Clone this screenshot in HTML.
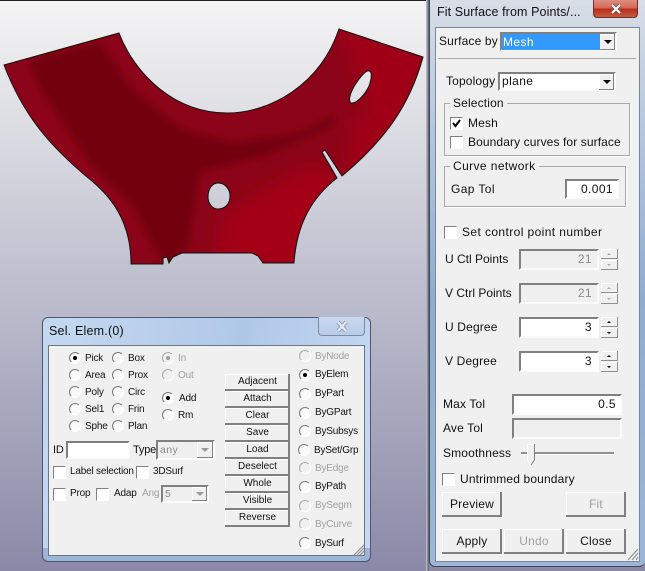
<!DOCTYPE html>
<html><head><meta charset="utf-8"><style>
html,body{margin:0;padding:0}
body{width:645px;height:571px;overflow:hidden;position:relative;font-family:"Liberation Sans",sans-serif;color:#000;background:linear-gradient(#f4f4f4 0,#bbbccc 300px,#8a8aa8 571px)}
div{box-sizing:border-box}
.a,.t,.in,.b,.r,.c,.g,.sp{position:absolute}
.t{white-space:nowrap;line-height:14px;height:14px}
.s{font-size:10px;letter-spacing:-.2px;color:#111;transform:translateY(1px)}
.m{font-size:12px;letter-spacing:.15px;color:#111}
.w{letter-spacing:.4px}
.d{color:#a0a0a0}
.in{border:2px solid;border-color:#808080 #fbfbfb #fbfbfb #808080;background:#fff;font-size:12px;text-align:right;padding-right:4px;letter-spacing:.4px;color:#111}
.in.off{background:#efefef;color:#8a8a8a}
.b{background:#f0f0f0;box-shadow:inset -2px -2px 0 #808080,inset 1px 1px 0 #fff;text-align:center;color:#111}
.b.sm{font-size:10px;letter-spacing:0;line-height:16px;height:17px;left:225px;width:65px}
.b.lg{font-size:12px;line-height:24px;height:25px;width:60px;letter-spacing:.2px}
.r{width:12px;height:12px;border-radius:50%;border:1px solid;border-color:#777 #fff #fff #777;background:#fafafa}
.r.on:after{content:"";position:absolute;left:3px;top:3px;width:4px;height:4px;border-radius:50%;background:#000}
.r.off.on:after{background:#999}
.r.off{background:#f0f0f0;border-color:#aaa #fff #fff #aaa}
.c{width:13px;height:13px;border:1px solid;border-color:#808080 #fff #fff #808080;background:#fff}
.g{border:1px solid #a8a8a8;box-shadow:1px 1px 0 #fff}
.ar{position:absolute;background:#f0f0f0;box-shadow:inset -1px -1px 0 #808080,inset 1px 1px 0 #fff}
.ar:after{content:"";position:absolute;left:50%;top:50%;margin:-2px 0 0 -4px;border:4px solid transparent;border-top:4px solid #000;border-bottom:0}
.ar.off:after{border-top-color:#999}
.sp{width:17px;height:10px;background:#f0f0f0;box-shadow:inset -1px -1px 0 #909090,inset 1px 1px 0 #fff}
.sp:after{content:"";position:absolute;left:6px;top:4px;border:2px solid transparent;border-bottom:2px solid #000;border-top:0}
.sp.dn:after{border-bottom:0;border-top:2px solid #000}
.sp.off:after{border-bottom-color:#aaa;border-top-color:#aaa}
</style></head><body>
<div class="a" style="left:0;top:0;width:645px;height:1px;background:#222"></div>
<div class="a" style="left:426px;top:0;width:3px;height:571px;background:linear-gradient(90deg,#c8c8d4,#555a66)"></div>

<svg class="a" style="left:0;top:0" width="430" height="300" viewBox="0 0 430 300">
<defs>
<clipPath id="cp"><path clip-rule="evenodd" d="M4 65 L119 33 C135 75 175 113 227 113 C270 113 320 85 339 29 L423 57 C410 105 385 140 342 176 L325 150 L322 152 L337 178 C315 195 297 220 294 263 L263 263 L258 256 L252 253 L182 253 L173 257 L169 263 L167 257 L163 258 L163 264 L131 264 C131 220 110 195 87 177 C55 150 25 120 4 65 Z M218 183 C225 183 230 189 230 196 C230 204 225 209 218 209 C212 209 208 203 208 197 C208 189 212 183 218 183 Z M369 71 C372 71 372 78 369 86 C365 95 356 104 351 103 C348 101 350 93 355 85 C360 77 366 70 369 71 Z"/></clipPath>
<filter id="bl" x="-30%" y="-30%" width="160%" height="160%"><feGaussianBlur stdDeviation="4"/></filter>
<filter id="bl2" x="-30%" y="-30%" width="160%" height="160%"><feGaussianBlur stdDeviation="9"/></filter>
</defs>
<g clip-path="url(#cp)">
<rect width="430" height="300" fill="#8c0419"/>
<path d="M335 20 L430 50 L400 140 L345 185 L350 120 L372 110 Z" fill="#a00018" filter="url(#bl2)"/>
<path d="M215 270 L222 215 L310 165 L345 178 L310 270 Z" fill="#a40018" filter="url(#bl2)"/>
<path d="M28 60 L100 42 L133 90 L183 130 L233 143 L300 133 L335 115 L335 125 L267 155 L200 172 L187 250 L165 268 L133 207 L93 167 L43 93 Z" fill="#72000e" filter="url(#bl)"/>
</g>
<path d="M4 65 L119 33 C135 75 175 113 227 113 C270 113 320 85 339 29 L423 57 C410 105 385 140 342 176 L325 150 L322 152 L337 178 C315 195 297 220 294 263 L263 263 L258 256 L252 253 L182 253 L173 257 L169 263 L167 257 L163 258 L163 264 L131 264 C131 220 110 195 87 177 C55 150 25 120 4 65 Z M218 183 C225 183 230 189 230 196 C230 204 225 209 218 209 C212 209 208 203 208 197 C208 189 212 183 218 183 Z M369 71 C372 71 372 78 369 86 C365 95 356 104 351 103 C348 101 350 93 355 85 C360 77 366 70 369 71 Z" fill="none" stroke="#111" stroke-width="1"/>
</svg>

<!-- Sel. Elem dialog -->
<div class="a" style="left:42px;top:317px;width:329px;height:245px;border-radius:6px;border:1px solid #4a5a70;background:linear-gradient(100deg,#c4d8f0,#b0c8e8 55%,#c6daf2);"></div>
<div class="a" style="left:42px;top:548px;width:329px;height:14px;border-radius:0 0 6px 6px;border:1px solid #4a5a70;border-top:0;background:#9db5d6"></div>
<div class="t" style="left:49px;top:324px;font-size:12.5px;color:#111;letter-spacing:.2px">Sel. Elem.(0)</div>
<div class="a" style="left:318px;top:317px;width:47px;height:19px;border:1px solid #7a8ca8;border-top:0;border-radius:0 0 4px 4px;background:linear-gradient(#c8d8ee,#b8cce6)"></div>
<svg class="a" style="left:335px;top:320px" width="14" height="13"><path d="M3 2 L11 11 M11 2 L3 11" stroke="#8c9cb0" stroke-width="4" fill="none"/><path d="M3 2 L11 11 M11 2 L3 11" stroke="#e4eaf2" stroke-width="2.2" fill="none"/></svg>
<div class="a" style="left:48px;top:345px;width:317px;height:211px;background:#f0f0f0;border:1px solid #6a7688"></div>

<div class="r on" style="left:69px;top:352px"></div><div class="t s" style="left:85px;top:351px">Pick</div>
<div class="r" style="left:69px;top:369px"></div><div class="t s" style="left:85px;top:368px">Area</div>
<div class="r" style="left:69px;top:386px"></div><div class="t s" style="left:85px;top:385px">Poly</div>
<div class="r" style="left:69px;top:403px"></div><div class="t s" style="left:85px;top:402px">Sel1</div>
<div class="r" style="left:69px;top:420px"></div><div class="t s" style="left:85px;top:419px">Sphe</div>
<div class="r" style="left:112px;top:352px"></div><div class="t s" style="left:128px;top:351px">Box</div>
<div class="r" style="left:112px;top:369px"></div><div class="t s" style="left:128px;top:368px">Prox</div>
<div class="r" style="left:112px;top:386px"></div><div class="t s" style="left:128px;top:385px">Circ</div>
<div class="r" style="left:112px;top:403px"></div><div class="t s" style="left:128px;top:402px">Frin</div>
<div class="r" style="left:112px;top:420px"></div><div class="t s" style="left:128px;top:419px">Plan</div>
<div class="r off on" style="left:162px;top:352px"></div><div class="t s d" style="left:178px;top:351px">In</div>
<div class="r off" style="left:162px;top:369px"></div><div class="t s d" style="left:178px;top:368px">Out</div>
<div class="r on" style="left:162px;top:392px"></div><div class="t s" style="left:179px;top:391px">Add</div>
<div class="r" style="left:162px;top:409px"></div><div class="t s" style="left:178px;top:408px">Rm</div>

<div class="t s" style="left:53px;top:442px;font-size:11px">ID</div>
<div class="in" style="left:66px;top:441px;width:64px;height:18px"></div>
<div class="t s" style="left:133px;top:442px;font-size:11px">Type</div>
<div class="in off" style="left:156px;top:440px;width:59px;height:20px;text-align:left;padding:2px 0 0 2px;font-size:10.5px;line-height:13px">any</div>
<div class="ar off" style="left:197px;top:442px;width:16px;height:16px"></div>
<div class="c" style="left:53px;top:466px"></div><div class="t s" style="left:70px;top:464px">Label selection</div>
<div class="c" style="left:136px;top:466px"></div><div class="t s" style="left:153px;top:464px">3DSurf</div>
<div class="c" style="left:53px;top:488px"></div><div class="t s" style="left:70px;top:486px">Prop</div>
<div class="c" style="left:96px;top:488px"></div><div class="t s" style="left:114px;top:486px">Adap</div>
<div class="t s d" style="left:142px;top:486px">Ang</div>
<div class="in off" style="left:161px;top:485px;width:48px;height:18px;text-align:left;padding:1px 0 0 2px;font-size:10.5px;line-height:13px">5</div>
<div class="ar off" style="left:192px;top:487px;width:15px;height:14px"></div>

<div class="b sm" style="top:374px">Adjacent</div>
<div class="b sm" style="top:391px">Attach</div>
<div class="b sm" style="top:408px">Clear</div>
<div class="b sm" style="top:425px">Save</div>
<div class="b sm" style="top:442px">Load</div>
<div class="b sm" style="top:459px">Deselect</div>
<div class="b sm" style="top:476px">Whole</div>
<div class="b sm" style="top:493px">Visible</div>
<div class="b sm" style="top:510px">Reverse</div>

<div class="r off" style="left:299px;top:350px"></div><div class="t s d" style="left:315px;top:349px">ByNode</div>
<div class="r on" style="left:299px;top:369px"></div><div class="t s" style="left:315px;top:367px">ByElem</div>
<div class="r" style="left:299px;top:388px"></div><div class="t s" style="left:315px;top:386px">ByPart</div>
<div class="r" style="left:299px;top:407px"></div><div class="t s" style="left:315px;top:405px">ByGPart</div>
<div class="r" style="left:299px;top:425px"></div><div class="t s" style="left:315px;top:424px">BySubsys</div>
<div class="r" style="left:298px;top:444px"></div><div class="t s" style="left:314px;top:443px">BySet/Grp</div>
<div class="r off" style="left:299px;top:462px"></div><div class="t s d" style="left:315px;top:461px">ByEdge</div>
<div class="r" style="left:299px;top:481px"></div><div class="t s" style="left:315px;top:479px">ByPath</div>
<div class="r off" style="left:299px;top:500px"></div><div class="t s d" style="left:315px;top:498px">BySegm</div>
<div class="r off" style="left:299px;top:518px"></div><div class="t s d" style="left:315px;top:517px">ByCurve</div>
<div class="r" style="left:299px;top:537px"></div><div class="t s" style="left:315px;top:536px">BySurf</div>
<svg class="a" style="left:353px;top:544px" width="12" height="12"><path d="M11 1 L1 11 M11 4 L4 11 M11 7 L7 11" stroke="#909090" stroke-width="1.2" fill="none"/></svg>

<!-- Fit Surface dialog -->
<div class="a" style="left:429px;top:0;width:216px;height:567px;border-radius:0 0 6px 6px;border:1px solid #3c4656;border-top:0;border-right:0;background:linear-gradient(#d9dee6 0,#c6d2e2 60px,#8fabd0 300px,#9db6d8 567px)"></div>
<div class="a" style="left:593px;top:0;width:45px;height:18px;border-radius:0 0 4px 4px;border:1px solid #6e3028;border-top:0;background:linear-gradient(#dc8e80 0,#d66a58 45%,#b8301c 55%,#c85a40 100%)"></div>
<svg class="a" style="left:609px;top:3px" width="14" height="12"><path d="M3 2 L11 10 M11 2 L3 10" stroke="#5a3a38" stroke-width="4" fill="none"/><path d="M3 2 L11 10 M11 2 L3 10" stroke="#f0eef0" stroke-width="2.4" fill="none"/></svg>
<div class="t m" style="left:437px;top:5px;font-size:12.5px;letter-spacing:.1px">Fit Surface from Points/...</div>
<div class="a" style="left:435px;top:27px;width:205px;height:535px;background:#f0f0f0;border:1px solid #7c8898"></div>

<div class="t m" style="left:439px;top:34px">Surface by</div>
<div class="in" style="left:500px;top:32px;width:117px;height:19px"></div>
<div class="a" style="left:502px;top:34px;width:98px;height:16px;background:#3399ff;color:#fff;font-size:12px;letter-spacing:.4px;line-height:16px;padding-left:1px">Mesh</div>
<div class="ar" style="left:600px;top:34px;width:15px;height:16px"></div>
<div class="a" style="left:438px;top:58px;width:198px;height:1px;background:#a8a8a8"></div>

<div class="t m" style="left:446px;top:74px">Topology</div>
<div class="in" style="left:498px;top:72px;width:118px;height:19px;text-align:left;padding:0 0 0 2px;line-height:15px">plane</div>
<div class="ar" style="left:599px;top:74px;width:15px;height:16px"></div>

<div class="g" style="left:444px;top:103px;width:186px;height:53px"></div>
<div class="t m" style="left:450px;top:96px;background:#f0f0f0;padding:0 3px">Selection</div>
<div class="c" style="left:450px;top:117px"></div>
<svg class="a" style="left:451px;top:118px" width="11" height="11"><path d="M2 5 L4.5 8 L9 2" stroke="#000" stroke-width="2" fill="none"/></svg>
<div class="t m" style="left:468px;top:116px">Mesh</div>
<div class="c" style="left:450px;top:136px"></div>
<div class="t m" style="left:468px;top:135px;letter-spacing:.1px">Boundary curves for surface</div>

<div class="g" style="left:444px;top:166px;width:182px;height:41px"></div>
<div class="t m w" style="left:450px;top:159px;background:#f0f0f0;padding:0 3px">Curve network</div>
<div class="t m w" style="left:451px;top:182px">Gap Tol</div>
<div class="in" style="left:565px;top:179px;width:54px;height:20px;line-height:16px">0.001</div>

<div class="c" style="left:444px;top:226px"></div>
<div class="t m w" style="left:462px;top:225px">Set control point number</div>

<div class="t m" style="left:445px;top:252px;letter-spacing:0">U Ctl Points</div>
<div class="in off" style="left:519px;top:249px;width:80px;height:21px;line-height:17px;padding-right:5px">21</div>
<div class="sp off" style="left:601px;top:249px"></div><div class="sp dn off" style="left:601px;top:260px"></div>
<div class="t m" style="left:445px;top:286px;letter-spacing:0">V Ctrl Points</div>
<div class="in off" style="left:519px;top:283px;width:80px;height:21px;line-height:17px;padding-right:5px">21</div>
<div class="sp off" style="left:601px;top:283px"></div><div class="sp dn off" style="left:601px;top:294px"></div>
<div class="t m" style="left:445px;top:320px">U Degree</div>
<div class="in" style="left:519px;top:317px;width:80px;height:21px;line-height:17px;padding-right:5px">3</div>
<div class="sp" style="left:601px;top:317px"></div><div class="sp dn" style="left:601px;top:328px"></div>
<div class="t m" style="left:445px;top:354px">V Degree</div>
<div class="in" style="left:519px;top:351px;width:80px;height:21px;line-height:17px;padding-right:5px">3</div>
<div class="sp" style="left:601px;top:351px"></div><div class="sp dn" style="left:601px;top:362px"></div>

<div class="t m" style="left:443px;top:397px">Max Tol</div>
<div class="in" style="left:512px;top:394px;width:110px;height:21px;line-height:17px">0.5</div>
<div class="t m" style="left:443px;top:421px">Ave Tol</div>
<div class="in off" style="left:512px;top:418px;width:110px;height:21px"></div>
<div class="t m" style="left:443px;top:446px">Smoothness</div>
<div class="a" style="left:521px;top:452px;width:93px;height:3px;background:#909090;border-bottom:1px solid #fff"></div>
<svg class="a" style="left:526px;top:443px" width="10" height="24"><path d="M1.5 1.5 H8.5 V17 L5 22 L1.5 17 Z" fill="#f0f0f0" stroke="#fff"/><path d="M8.5 1 V17 L5 22" fill="none" stroke="#808080"/></svg>
<div class="c" style="left:442px;top:473px"></div>
<div class="t m" style="left:460px;top:472px">Untrimmed boundary</div>

<div class="b lg" style="left:442px;top:492px">Preview</div>
<div class="b lg d" style="left:566px;top:492px;color:#a0a0a0">Fit</div>
<div class="b lg" style="left:442px;top:529px">Apply</div>
<div class="b lg" style="left:504px;top:529px;color:#a0a0a0">Undo</div>
<div class="b lg" style="left:566px;top:529px">Close</div>
<svg class="a" style="left:627px;top:548px" width="12" height="13"><path d="M11 1 L1 12 M11 5 L5 12 M11 9 L9 12" stroke="#909090" stroke-width="1.2" fill="none"/></svg>
</body></html>
